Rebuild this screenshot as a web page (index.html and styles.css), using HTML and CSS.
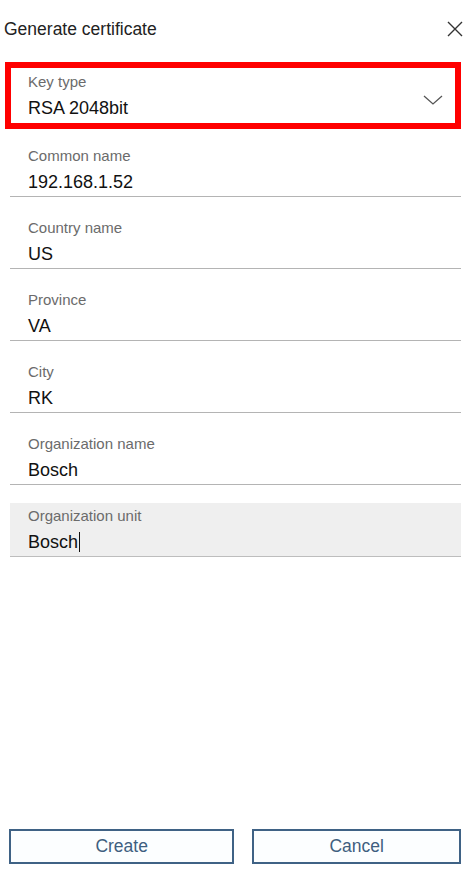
FILE: index.html
```html
<!DOCTYPE html>
<html lang="en">
<head>
  <meta charset="UTF-8" />
  <title>Generate certificate</title>
  <link rel="stylesheet" href="styles.css">
</head>
<body>
  <div class="dialog">
    <div class="header">
      <span class="title">Generate certificate</span>
      <svg class="close" width="16" height="16" viewBox="0 0 16 16">
        <path d="M1 1 L15 15 M15 1 L1 15" stroke="#333" stroke-width="1.4" fill="none" />
      </svg>
    </div>

    <div class="form">
      <div class="field select">
        <div class="label">Key type</div>
        <div class="value">RSA 2048bit</div>
        <svg class="chevron" width="20" height="10" viewBox="0 0 20 10">
          <path d="M1 1 L10 9 L19 1" stroke="#555" stroke-width="1.3" fill="none" />
        </svg>
      </div>

      <div class="field">
        <div class="label">Common name</div>
        <div class="value">192.168.1.52</div>
      </div>
      <div class="field">
        <div class="label">Country name</div>
        <div class="value">US</div>
      </div>
      <div class="field">
        <div class="label">Province</div>
        <div class="value">VA</div>
      </div>
      <div class="field">
        <div class="label">City</div>
        <div class="value">RK</div>
      </div>
      <div class="field">
        <div class="label">Organization name</div>
        <div class="value">Bosch</div>
      </div>
      <div class="field focused">
        <div class="label">Organization unit</div>
        <div class="value">Bosch<span class="caret"></span></div>
      </div>
    </div>

    <div class="footer">
      <button class="btn btn-create">Create</button>
      <button class="btn btn-cancel">Cancel</button>
    </div>
  </div>
</body>
</html>
```

FILE: styles.css
```css
body {
  margin: 0;
  background-color: #fff;
  font-family: "Liberation Sans", Arial, sans-serif;
  color: #111;
}

.dialog {
  height: 871px;
  display: flex;
  flex-direction: column;
}

.header {
  height: 58px;
  display: flex;
  align-items: center;
  justify-content: space-between;
  padding: 0 9px 0 4px;
}

.title {
  font-size: 17.5px;
  color: #222;
}

.close {
  display: block;
}

.form {
  padding: 4px 11px 0 10px;
  display: flex;
  flex-direction: column;
  gap: 18px;
}

.field {
  height: 49px; /* + padding + border = 54 */
  padding: 4px 0 0 18px;
  border-bottom: 1px solid #b4b4b4;
  position: relative;
}

.field .label {
  font-size: 15px;
  line-height: 18px;
  color: #6b6b6b;
}

.field .value {
  margin-top: 7px;
  font-size: 18px;
  line-height: 20px;
  color: #111;
}

/* annotation box round the key type select */
.field.select {
  height: 50px;
  margin-left: -5px;
  margin-bottom: -4px;
  padding: 5px 0 0 17px;
  border: 6px solid #ff0000;
}

.chevron {
  position: absolute;
  right: 12px;
  top: 27px;
}

.field.focused {
  background-color: #efefef;
  border-bottom-color: #bdbdbd;
}

.caret {
  display: inline-block;
  width: 1px;
  height: 20px;
  margin-left: 1px;
  background-color: #111;
  vertical-align: -4px;
}

.footer {
  margin-top: auto;
  display: flex;
  gap: 18px;
  padding: 0 11px 7px 9px;
}

.btn {
  height: 35px;
  border: 2px solid #3f6285;
  background-color: #fcfeff;
  color: #3f5f80;
  font-family: "Liberation Sans", Arial, sans-serif;
  font-size: 17.5px;
  cursor: pointer;
}

.btn-create {
  flex: 226;
}

.btn-cancel {
  flex: 208;
}
```
